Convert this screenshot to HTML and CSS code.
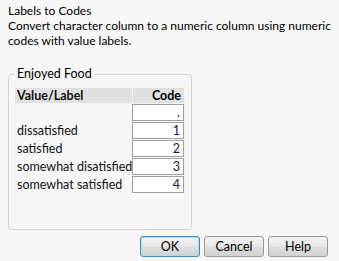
FILE: index.html
```html
<!DOCTYPE html>
<html lang="en">
<head>
    <meta charset="UTF-8">
    <title>Labels to Codes</title>
    <link rel="stylesheet" href="styles.css">
</head>
<body>
    <div class="dialog">
        <div class="intro">
            <div>Labels to Codes</div>
            <div>Convert character column to a numeric column using numeric<br>codes with value labels.</div>
        </div>

        <div class="group">
            <div class="group-title">Enjoyed Food</div>
            <div class="table">
                <div class="row head">
                    <div class="label">Value/Label</div>
                    <div class="code">Code</div>
                </div>
                <div class="row">
                    <div class="label"></div>
                    <div class="code cell">.</div>
                </div>
                <div class="row">
                    <div class="label">dissatisfied</div>
                    <div class="code cell">1</div>
                </div>
                <div class="row">
                    <div class="label">satisfied</div>
                    <div class="code cell">2</div>
                </div>
                <div class="row">
                    <div class="label">somewhat disatisfied</div>
                    <div class="code cell">3</div>
                </div>
                <div class="row">
                    <div class="label">somewhat satisfied</div>
                    <div class="code cell">4</div>
                </div>
            </div>
        </div>

        <div class="buttons">
            <button class="default">OK</button>
            <button>Cancel</button>
            <button>Help</button>
        </div>
    </div>
</body>
</html>
```

FILE: styles.css
```css
body {
    margin: 0;
    background: #f7f7f7;
    font-family: Lato, 'Open Sans', sans-serif;
    font-size: 12.5px;
    color: #000;
}

.dialog {
    width: 339px;
    height: 261px;
    padding: 3px 8px 0 8px;
    box-sizing: border-box;
}

.intro {
    font-size: 12px;
    line-height: 15px;
    white-space: nowrap;
}

.group {
    position: relative;
    margin-top: 26px;
    width: 184px;
    height: 156px;
    box-sizing: border-box;
    border: 1px solid #d3d3d3;
    border-radius: 3px;
    padding: 13px 7px 0 6px;
}

.group-title {
    position: absolute;
    top: -9px;
    left: 5px;
    padding: 0 3px;
    background: #f7f7f7;
    line-height: 16px;
}

.row {
    display: flex;
    height: 18px;
    line-height: 17px;
    white-space: nowrap;
}

.row.head {
    height: 15px;
    line-height: 15px;
    margin-bottom: 1px;
    font-weight: bold;
}

.label {
    width: 117px;
    padding-left: 2px;
    box-sizing: border-box;
    color: #111;
}

.head .label {
    background: #e0e0e0;
}

.code {
    width: 51px;
    margin-left: 1px;
    text-align: right;
    padding-right: 3px;
    box-sizing: border-box;
}

.head .code {
    background: #e0e0e0;
}

.cell {
    width: 52px;
    margin-left: 0;
    height: 17px;
    line-height: 15px;
    border: 1px solid #a0a0a0;
    background: #fff;
    color: #1a1050;
}

.buttons {
    display: flex;
    justify-content: flex-end;
    gap: 4px;
    margin-top: 6px;
    padding-right: 3px;
}

button {
    width: 60px;
    height: 21px;
    padding: 0;
    font-family: Lato, 'Open Sans', sans-serif;
    font-size: 12.5px;
    color: #000;
    border: 1px solid #9a9a9a;
    border-radius: 3px;
    background: linear-gradient(#f4f4f4, #e6e6e6 50%, #dcdcdc 51%, #d2d2d2);
}

button.default {
    border-color: #3d8ec9;
    box-shadow: inset 0 0 0 1px #a9dff5;
}
```
